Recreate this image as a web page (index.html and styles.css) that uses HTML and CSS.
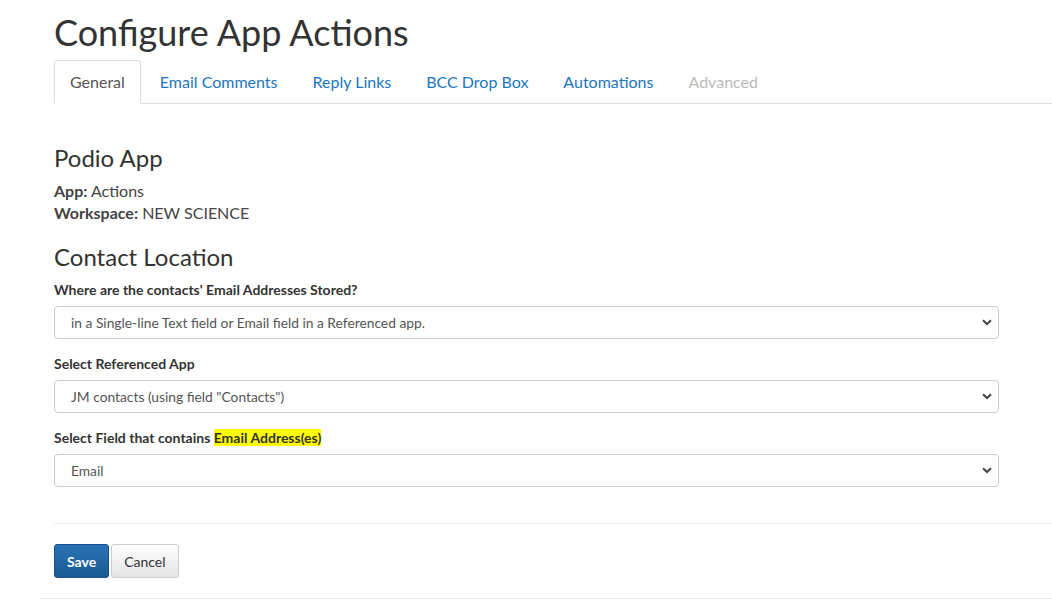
FILE: index.html
```html
<!DOCTYPE html>
<html lang="en">
<head>
    <meta charset="UTF-8">
    <meta name="viewport" content="width=device-width, initial-scale=1.0">
    <title>Configure App Actions</title>
    <link rel="stylesheet" href="styles.css">
</head>
<body>

<div class="page">
    <div class="content">
        <h1>Configure App Actions</h1>

        <ul class="tabs">
            <li class="tab active">General</li>
            <li class="tab">Email Comments</li>
            <li class="tab">Reply Links</li>
            <li class="tab">BCC Drop Box</li>
            <li class="tab">Automations</li>
            <li class="tab disabled">Advanced</li>
        </ul>

        <h2 class="section-title first">Podio App</h2>
        <div class="info"><b>App:</b> Actions</div>
        <div class="info"><b>Workspace:</b> NEW SCIENCE</div>

        <h2 class="section-title">Contact Location</h2>

        <form id="contactForm">
            <div class="field">
                <label for="storeType">Where are the contacts' Email Addresses Stored?</label>
                <div class="select-wrap">
                    <select id="storeType">
                        <option>in a Single-line Text field or Email field in a Referenced app.</option>
                    </select>
                    <svg class="chevron" width="10" height="7" viewBox="0 0 10 7"><path d="M1 1.2 L5 5 L9 1.2" fill="none" stroke="#444" stroke-width="2"/></svg>
                </div>
            </div>
            <div class="field">
                <label for="refApp">Select Referenced App</label>
                <div class="select-wrap">
                    <select id="refApp">
                        <option>JM contacts (using field "Contacts")</option>
                    </select>
                    <svg class="chevron" width="10" height="7" viewBox="0 0 10 7"><path d="M1 1.2 L5 5 L9 1.2" fill="none" stroke="#444" stroke-width="2"/></svg>
                </div>
            </div>
            <div class="field">
                <label for="emailField">Select Field that contains <span class="mark">Email Address(es)</span></label>
                <div class="select-wrap">
                    <select id="emailField">
                        <option>Email</option>
                    </select>
                    <svg class="chevron" width="10" height="7" viewBox="0 0 10 7"><path d="M1 1.2 L5 5 L9 1.2" fill="none" stroke="#444" stroke-width="2"/></svg>
                </div>
            </div>

            <hr>

            <div class="actions">
                <button type="button" class="btn btn-primary">Save</button>
                <button type="button" class="btn">Cancel</button>
            </div>
        </form>
    </div>
</div>

</body>
</html>
```

FILE: styles.css
```css
body {
    margin: 0;
    font-family: Lato, "Open Sans", sans-serif;
    color: #333;
    background: #fff;
}
.page {
    margin-left: 39px;
    padding-bottom: 20px;
    border-bottom: 1px solid #e8e8e8;
}
.content {
    padding-left: 15px;
}
h1 {
    margin: 0 0 8px 0;
    padding-top: 12px;
    font-size: 36px;
    font-weight: 400;
    line-height: 40px;
    color: #333;
}
.tabs {
    display: flex;
    list-style: none;
    margin: 0;
    padding: 0;
    border-bottom: 1px solid #ddd;
}
.tab {
    padding: 10px 15px 11px 15px;
    margin-right: 3px;
    margin-bottom: -1px;
    font-size: 16px;
    line-height: 21px;
    color: #1c76c0;
    border: 1px solid transparent;
    border-radius: 4px 4px 0 0;
    cursor: pointer;
}
.tab.active {
    color: #555;
    background: #fff;
    border-color: #ddd;
    border-bottom-color: #fff;
}
.tab.disabled {
    color: #bbb;
    cursor: default;
}
.section-title {
    margin: 19px 0 8px 0;
    font-size: 24px;
    font-weight: 400;
    line-height: 28px;
}
.section-title.first {
    margin-top: 40px;
}
.info {
    font-size: 16px;
    line-height: 22px;
    color: #444;
}
.info b {
    color: #444;
}
.field {
    width: 945px;
    margin-top: 15px;
}
.section-title + form .field:first-child {
    margin-top: 9px;
}
label {
    display: block;
    font-size: 14px;
    font-weight: 700;
    line-height: 20px;
    margin-bottom: 6px;
}
.mark {
    background: #ffff00;
}
.select-wrap {
    position: relative;
}
select {
    display: block;
    width: 100%;
    height: 33px;
    padding: 0 16px;
    font-family: inherit;
    font-size: 13.8px;
    color: #555;
    background: #fff;
    border: 1px solid #ccc;
    border-radius: 4px;
    -webkit-appearance: none;
    appearance: none;
}
.chevron {
    position: absolute;
    right: 7px;
    top: 13px;
    pointer-events: none;
}
hr {
    margin: 36px 0 20px 0;
    border: 0;
    border-top: 1px solid #eee;
}
.actions {
    display: flex;
    gap: 2px;
}
.btn {
    height: 34px;
    padding: 0 12px;
    font-family: inherit;
    font-size: 14px;
    color: #333;
    background: linear-gradient(#fff, #e4e4e4);
    border: 1px solid #ccc;
    border-radius: 3px;
    cursor: pointer;
}
.btn-primary {
    font-weight: 700;
    color: #fff;
    background: linear-gradient(#2a73b4, #1a5a94);
    border-color: #1a5088;
}
```
